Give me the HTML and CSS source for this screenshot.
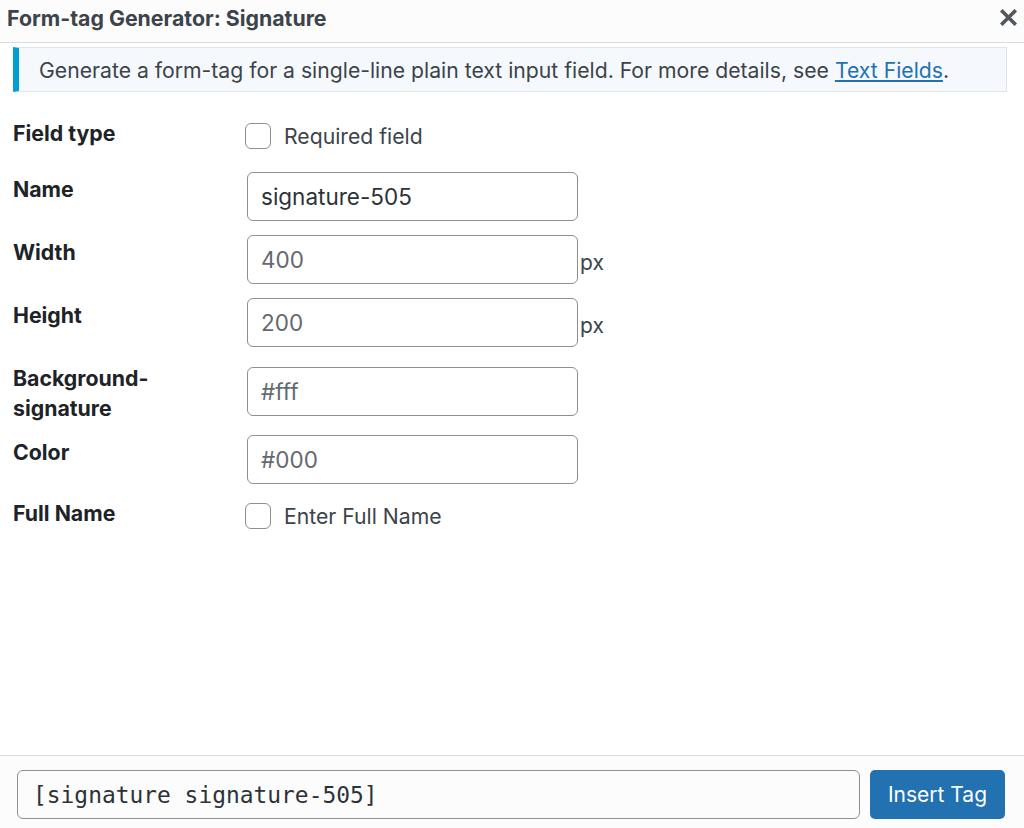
FILE: index.html
```html
<!DOCTYPE html>
<html lang="en">

<head>
    <meta charset="UTF-8">
    <meta name="viewport" content="width=device-width, initial-scale=1.0">
    <title>Form-tag Generator: Signature</title>
    <link rel="stylesheet" href="styles.css">
</head>

<body>
    <div class="modal">
        <div class="title-bar">
            <h1>Form-tag Generator: Signature</h1>
            <button class="close" aria-label="Close">
                <svg width="17" height="17" viewBox="0 0 17 17">
                    <path d="M2.5 2.5 L14.5 14.5 M14.5 2.5 L2.5 14.5" stroke="#50575e" stroke-width="3.6" stroke-linecap="square" fill="none"/>
                </svg>
            </button>
        </div>

        <div class="content">
            <div class="notice">
                Generate a form-tag for a single-line plain text input field. For more details, see <a href="#">Text Fields</a>.
            </div>

            <div class="rows">
                <div class="row row-first">
                    <div class="label">Field type</div>
                    <label class="check"><span class="box"></span>Required field</label>
                </div>
                <div class="row">
                    <div class="label">Name</div>
                    <input type="text" value="signature-505">
                </div>
                <div class="row">
                    <div class="label">Width</div>
                    <div class="with-unit"><input type="text" placeholder="400"><span class="unit">px</span></div>
                </div>
                <div class="row">
                    <div class="label">Height</div>
                    <div class="with-unit"><input type="text" placeholder="200"><span class="unit">px</span></div>
                </div>
                <div class="row row-tall">
                    <div class="label">Background-<br>signature</div>
                    <input type="text" placeholder="#fff">
                </div>
                <div class="row">
                    <div class="label">Color</div>
                    <input type="text" placeholder="#000">
                </div>
                <div class="row">
                    <div class="label">Full Name</div>
                    <label class="check"><span class="box"></span>Enter Full Name</label>
                </div>
            </div>
        </div>

        <div class="footer">
            <input type="text" class="tag" value="[signature signature-505]" readonly>
            <button class="insert">Insert Tag</button>
        </div>
    </div>
</body>

</html>
```

FILE: styles.css
```css
* {
    margin: 0;
    padding: 0;
    box-sizing: border-box;
}

body {
    font-family: Inter, "Noto Sans", sans-serif;
    color: #1d2327;
    background: #fff;
}

.modal {
    display: flex;
    flex-direction: column;
    height: 100vh;
}

.title-bar {
    height: 43px;
    background: #fcfcfc;
    border-bottom: 1px solid #dcdcde;
    display: flex;
    align-items: center;
    justify-content: space-between;
    padding: 0 7px 0 7px;
}

.title-bar h1 {
    font-size: 21.3px;
    font-weight: 700;
    color: #3c434a;
    margin-top: -6px;
}

.close {
    background: none;
    border: none;
    display: flex;
    margin-top: -7px;
}

.content {
    flex: 1;
    padding: 4px 17px 0 13px;
}

.notice {
    background: #f5f9fd;
    border: 1px solid #dde6ed;
    border-left: 6px solid #00a0d2;
    height: 45px;
    display: flex;
    align-items: center;
    padding-left: 20px;
    font-size: 21.2px;
    color: #3c434a;
}

.notice a {
    color: #2271b1;
    margin-left: 6px;
}

.rows {
    display: flex;
    flex-direction: column;
    gap: 14px;
    padding-top: 26px;
}

.row {
    display: grid;
    grid-template-columns: 234px auto;
    align-items: start;
}

.row-first {
    padding-bottom: 7px;
}

.label {
    font-size: 21.3px;
    font-weight: 700;
    line-height: 30px;
    padding-top: 2px;
    color: #1d2327;
}

.row-first .label,
.row:last-child .label {
    padding-top: 0;
}

.row-tall {
    margin-bottom: -2px;
}

.row-tall input {
    margin-top: 6px;
}

.check {
    display: flex;
    align-items: center;
    font-size: 21.2px;
    color: #3c434a;
    height: 30px;
    margin-top: 3px;
    margin-left: -2px;
}

.box {
    width: 26px;
    height: 26px;
    border: 1px solid #8c8f94;
    border-radius: 6px;
    margin-right: 13px;
    background: #fff;
}

input {
    width: 331px;
    height: 49px;
    border: 1px solid #8c8f94;
    border-radius: 6px;
    padding: 0 13px;
    font-family: Inter, "Noto Sans", sans-serif;
    font-size: 22.5px;
    color: #2c3338;
    outline: none;
}

input::placeholder {
    color: #646970;
}

.with-unit {
    display: flex;
    align-items: center;
}

.unit {
    font-size: 21px;
    color: #3c434a;
    margin-left: 2px;
    margin-top: 6px;
}

.footer {
    height: 73px;
    background: #fcfcfc;
    border-top: 1px solid #dcdcde;
    display: flex;
    align-items: flex-start;
    gap: 10px;
    padding: 14px 19px 0 17px;
}

.tag {
    flex: 1;
    font-family: "DejaVu Sans Mono", "Liberation Mono", monospace;
    font-size: 22.9px;
    background: #fcfcfc;
    color: #2c3338;
    padding: 0 15px;
}

.insert {
    width: 135px;
    height: 49px;
    background: #2271b1;
    border: none;
    border-radius: 5px;
    color: #fff;
    font-family: Inter, "Noto Sans", sans-serif;
    font-size: 21px;
}
```
